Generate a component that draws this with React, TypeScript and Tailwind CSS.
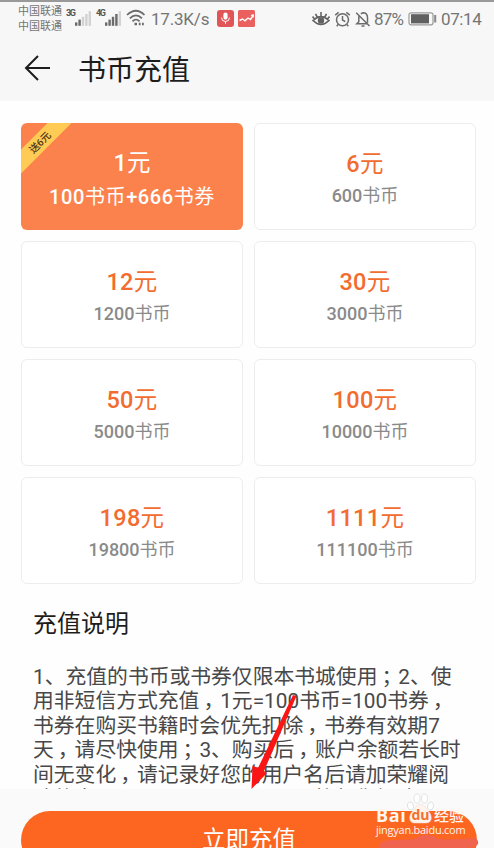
const PLANS = [
  { price: "1元", coins: "100书币+666书券", active: true, tag: "送6元" },
  { price: "6元", coins: "600书币" },
  { price: "12元", coins: "1200书币" },
  { price: "30元", coins: "3000书币" },
  { price: "50元", coins: "5000书币" },
  { price: "100元", coins: "10000书币" },
  { price: "198元", coins: "19800书币" },
  { price: "1111元", coins: "111100书币" },
];

const NOTES = [
  "1、充值的书币或书券仅限本书城使用；2、使",
  "用非短信方式充值，1元=100书币=100书券，",
  "书券在购买书籍时会优先扣除，书券有效期7",
  "天，请尽快使用；3、购买后，账户余额若长时",
  "间无变化，请记录好您的用户名后请加荣耀阅",
  "读的客服QQ： 2851508480 ，将帮您解决",
];

function Signal({ label, level }: { label: string; level: number }) {
  return (
    <div className="flex h-[17px] items-start">
      <span className="w-[9px] text-[9px] leading-[9px] font-bold tracking-[-1.4px] text-[#555]">{label}</span>
      <svg width="17" height="17" viewBox="0 0 17 17">
        {[0, 1, 2, 3, 4].map((i) => (
          <rect key={i} x={i * 3.4} y={13.4 - i * 2.8} width="2.4" height={3.4 + i * 2.8} fill={i < level ? "#6b6b6b" : "#d2d2d2"} />
        ))}
      </svg>
    </div>
  );
}

function StatusBar() {
  return (
    <div className="flex h-[38px] items-start border-t-2 border-[#999] text-[#757575]">
      <div className="ml-[18px] mt-[2px] w-[45px] whitespace-nowrap text-[11px] leading-[15px]">
        <div>中国联通</div>
        <div>中国联通</div>
      </div>
      <div className="ml-[3px] mt-[7px] flex">
        <Signal label="3G" level={2} />
      </div>
      <div className="ml-[4px] mt-[7px] flex">
        <Signal label="4G" level={4} />
      </div>
      <svg className="ml-[4px] mt-[7px]" width="20" height="18" viewBox="0 0 20 18" fill="none" stroke="#6b6b6b" strokeWidth="1.7">
        <path d="M1 6Q10-2.5 18.5 6M3.8 9.4Q10 3.2 16 9.4M6.5 12.4Q10 8.6 13.5 12.4" />
        <path d="M8.5 15h2.5M12.8 15h1.8M16 15h1.8" strokeWidth="2.4" />
      </svg>
      <span className="ml-[5px] mt-[7px] w-[66px] text-[17px] leading-5 tracking-[-0.2px]">17.3K/s</span>
      <svg className="mt-[8px]" width="17" height="17" viewBox="0 0 17 17">
        <rect width="17" height="17" rx="3" fill="#df5558" />
        <rect x="6.4" y="2.5" width="4.2" height="7.2" rx="2.1" fill="#fff" />
        <path d="M4.5 7.5a4 4 0 0 0 8 0M8.5 11.5v2.3" stroke="#fff" fill="none" />
      </svg>
      <svg className="ml-[4px] mt-[8px]" width="17" height="17" viewBox="0 0 17 17">
        <rect width="17" height="17" rx="1.5" fill="#e9605f" />
        <path d="M1.5 10.5 4.5 9l2.5 1.8L10 8l2.5 1.5L15.5 5" stroke="#fff" strokeWidth="1.4" fill="none" />
        <path d="m12.5 5 3.2-.8v3.5z" fill="#fff" />
      </svg>
      <div className="ml-auto mr-[11px] mt-[7px] flex items-center">
        <svg width="18" height="18" viewBox="0 0 18 18" fill="none" stroke="#626262" strokeWidth="1.6">
          <path d="M1 10.5Q9 2.6 17 10.5Q9 18.4 1 10.5zM9 2v4M3.5 3.8 5.2 7M14.5 3.8 12.8 7M.5 6.5 2.6 9M17.5 6.5 15.4 9" />
          <circle cx="9" cy="10.4" r="2.4" fill="#626262" />
        </svg>
        <svg className="ml-[4px]" width="17" height="18" viewBox="0 0 17 18" fill="none" stroke="#6b6b6b" strokeWidth="1.5">
          <circle cx="8.5" cy="9.7" r="6" />
          <path d="M8.5 6v4l2.8 1.6M1.2 5.2 4.6 2.4M15.8 5.2l-3.4-2.8M4 14.5l-1.2 1.7M13 14.5l1.2 1.7" />
        </svg>
        <svg className="ml-[4px]" width="16" height="18" viewBox="0 0 16 18" fill="none" stroke="#6b6b6b" strokeWidth="1.5">
          <path d="M1.2 2.8 14.5 16M5.8 3.7 8 2.8c3 0 4.5 2 4.5 5v5M3.8 6.2v5.6L1.8 13.7h10M6.5 16h3" />
        </svg>
        <span className="ml-[3px] w-[34px] text-[17px] leading-5 tracking-[-0.8px]">87%</span>
        <svg width="29" height="14" viewBox="0 0 29 14">
          <rect x="1" y=".8" width="24" height="12" rx="2" fill="none" stroke="#9a9a9a" strokeWidth="1.2" />
          <rect x="3" y="2.2" width="18" height="9.2" fill="#606060" />
          <rect x="26.2" y="3" width="2" height="7.5" fill="#888" />
        </svg>
        <span className="ml-[4px] w-[42px] text-[17px] leading-5 tracking-[-0.4px]">07:14</span>
      </div>
    </div>
  );
}

// only the digits carry the medium weight, the characters stay regular
function Mixed({ text }: { text: string }) {
  return (
    <>
      {text.split(/([0-9+]+)/).map((s, i) => (
        <span key={i} className={/[0-9+]/.test(s) ? "font-medium" : "font-normal"}>{s}</span>
      ))}
    </>
  );
}

function Plan({ price, coins, active, tag }: { price: string; coins: string; active?: boolean; tag?: string }) {
  if (active) {
    return (
      <button className="relative flex h-[107px] flex-col items-center overflow-hidden rounded-md bg-[#fb824c] text-white">
        <span className="mt-[24px] text-[23.5px] leading-8"><Mixed text={price} /></span>
        <span className="mt-[5px] text-[20px] leading-[26px] tracking-[0.6px]"><Mixed text={coins} /></span>
        <span className="absolute top-[10.5px] -left-[31px] h-[17px] w-[100px] -rotate-45 bg-[#ffcb55] text-center text-[10px] leading-[17px] font-medium text-[#4e3515]">
          {tag}
        </span>
      </button>
    );
  }
  return (
    <button className="flex h-[107px] flex-col items-center rounded-md border border-[#ededed] bg-white">
      <span className="mt-[24px] text-[23.5px] leading-8 tracking-[0.3px] text-[#f26c2f]"><Mixed text={price} /></span>
      <span className="mt-[4px] text-[18px] leading-6 text-[#8a8a8a]"><Mixed text={coins} /></span>
    </button>
  );
}

// fullwidth commas sit in the middle of their cell
function NoteLine({ text }: { text: string }) {
  return (
    <p className="h-[24.4px] whitespace-nowrap">
      {text.split(/([，；])/).map((s, i) =>
        s === "，" || s === "；" ? <span key={i} className="-mr-[4px] ml-[4px]">{s}</span> : s
      )}
    </p>
  );
}

function Watermark() {
  return (
    <div className="absolute top-0 left-[376px] h-[59px] w-[104px] text-[#fff5f0]">
      <svg className="absolute inset-0" width="104" height="59" viewBox="0 0 104 59">
        <path d="M4 59V55Q6 51 20 51L38 50Q44 46 50 46Q58 46 62 50Q82 51 99 49Q103 51 102 55Q100 59 90 59z" fill="#f0634f" />
        <g fill="#fff" stroke="#dcdcdc" strokeWidth=".8">
          <ellipse cx="34.5" cy="17" rx="3" ry="4" transform="rotate(-15 34.5 17)" />
          <ellipse cx="41" cy="9.5" rx="3" ry="4.6" />
          <ellipse cx="48.5" cy="9.5" rx="3" ry="4.6" />
          <ellipse cx="54.5" cy="17" rx="3" ry="4" transform="rotate(15 54.5 17)" />
        </g>
        <path d="M44.5 15.5c4.5 0 5.5 4.5 8.5 7.5s4 11-3 11H39c-7 0-6-8-3-11s4-7.5 8.5-7.5z" fill="#fff3ec" stroke="#e6dcd6" strokeWidth=".5" />
      </svg>
      <div className="relative flex h-[20px] translate-y-[16px] items-center font-['Open_Sans'] text-[18px] leading-5 font-bold whitespace-nowrap">
        <span className="w-[33px] tracking-[0.6px]">Bai</span>
        <span className="w-[23px] text-center text-[14px] text-[#f4702f]">du</span>
        <span className="ml-[2px] font-['Noto_Sans_CJK_SC'] text-[15px] font-medium">经验</span>
      </div>
      <div className="relative mt-[14px] font-['Open_Sans'] text-[11px] leading-[14px] tracking-[-0.25px]">jingyan.baidu.com</div>
    </div>
  );
}

export default function App() {
  return (
    <div className="relative flex h-[848px] w-[494px] flex-col overflow-hidden bg-[#fefefe] font-[Roboto,'Noto_Sans_CJK_SC',sans-serif]">
      <header className="h-[101px] shrink-0 bg-[#f7f7f7]">
        <StatusBar />
        <div className="flex h-[62px] items-center pl-[24px] text-[#1d1d1d]">
          <svg className="-mt-[3px]" width="28" height="28" viewBox="0 0 28 28" fill="none" stroke="currentColor" strokeWidth="2">
            <path d="M26 14H2M14 2 2 14l12 12" />
          </svg>
          <h1 className="mt-[3px] ml-[26px] text-[28px] leading-none">书币充值</h1>
        </div>
      </header>

      <main className="h-[688px] shrink-0 overflow-hidden pt-[22px]">
        <div className="grid grid-cols-[222px_222px] gap-[11px] pl-[21px]">
          {PLANS.map((p) => <Plan key={p.price} {...p} />)}
        </div>
        <section className="pl-[33px]">
          <h2 className="mt-[24px] text-[24px] leading-8 text-[#1d1d1d]">充值说明</h2>
          <div className="mt-[25px] text-[20.8px] leading-[24.4px] text-[#484848]">
            {NOTES.map((t) => <NoteLine key={t} text={t} />)}
          </div>
        </section>
      </main>

      <footer className="relative h-[59px] shrink-0 bg-[#fafafa] pt-[22px]">
        <button className="ml-[21px] block h-[58px] w-[456px] rounded-full bg-[#fc6621] text-[23.5px] leading-[57px] text-white">立即充值</button>
        <Watermark />
      </footer>

      <svg className="pointer-events-none absolute top-[690px] left-[245px]" width="60" height="102" viewBox="0 0 60 102" fill="#fb1616">
        <path d="M48 5 51.5 6 19 81 22 83 6.5 99 7.5 75.5 13 78z" />
      </svg>
    </div>
  );
}
